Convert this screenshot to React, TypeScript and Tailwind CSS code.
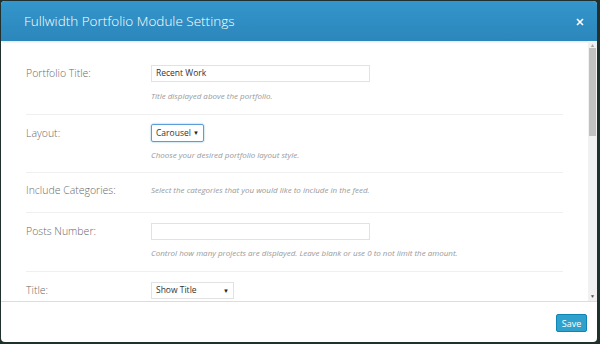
import React from "react";

const font = { fontFamily: '"Open Sans", "Liberation Sans", sans-serif' };

const Label = ({ children }: { children: React.ReactNode }) => (
  <div className="w-[125px] shrink-0 text-[10.5px] font-light text-[#6a6a6a] leading-[16px]">{children}</div>
);

const Desc = ({ children }: { children: React.ReactNode }) => (
  <p className="text-[8px] italic text-[#999] leading-[12px] whitespace-nowrap">{children}</p>
);

const Caret = () => <span className="text-[6px] text-[#222] leading-none">▼</span>;

export default function App() {
  return (
    <div className="w-[600px] h-[344px] bg-[#1f302d] pl-[1px] pt-[1px] pr-[3px] pb-[2px]" style={font}>
      <div className="h-full rounded-[4px] bg-white flex flex-col overflow-hidden">
        <div className="h-[40px] shrink-0 flex items-center justify-between pl-[23px] pr-[13px] bg-gradient-to-b from-[#3396cc] to-[#2c86bb] shadow-[0_1px_2px_rgba(0,0,0,0.12)]">
          <h1 className="text-[13.5px] text-white font-light">Fullwidth Portfolio Module Settings</h1>
          <svg width="8" height="8" viewBox="0 0 8 8" className="mt-[1px]">
            <path d="M1 1L7 7M7 1L1 7" stroke="#fff" strokeWidth="1.6" />
          </svg>
        </div>

        <div className="flex-1 flex min-h-0">
          <div className="flex-1 pl-[25px] pr-[25px] pt-[14px] overflow-hidden">
            <div className="pt-[10px] pb-[12px] border-b border-[#efefef] flex">
              <Label>Portfolio Title:</Label>
              <div>
                <div className="w-[219px] h-[17px] border border-[#e2e2e2] flex items-center px-[4px] text-[8.5px] text-[#333]">
                  Recent Work
                </div>
                <div className="mt-[8px]">
                  <Desc>Title displayed above the portfolio.</Desc>
                </div>
              </div>
            </div>

            <div className="pt-[9px] pb-[11px] border-b border-[#efefef] flex">
              <Label><span className="leading-[18px] block">Layout:</span></Label>
              <div>
                <div className="w-[53px] h-[18px] border border-[#5b9dd9] shadow-[0_0_2px_rgba(30,140,190,0.6)] rounded-[2px] flex items-center justify-between pl-[4px] pr-[4px] text-[8.5px] text-[#333]">
                  Carousel <Caret />
                </div>
                <div className="mt-[7px]">
                  <Desc>Choose your desired portfolio layout style.</Desc>
                </div>
              </div>
            </div>

            <div className="pt-[8px] pb-[13px] border-b border-[#efefef] flex items-center">
              <Label><span className="leading-[18px] block">Include Categories:</span></Label>
              <Desc>Select the categories that you would like to include in the feed.</Desc>
            </div>

            <div className="pt-[10px] pb-[12px] border-b border-[#efefef] flex">
              <Label>Posts Number:</Label>
              <div>
                <div className="w-[219px] h-[17px] border border-[#e2e2e2]" />
                <div className="mt-[7px]">
                  <Desc>Control how many projects are displayed. Leave blank or use 0 to not limit the amount.</Desc>
                </div>
              </div>
            </div>

            <div className="pt-[10px] flex">
              <Label>Title:</Label>
              <div className="w-[83px] h-[17px] border border-[#e2e2e2] flex items-center justify-between pl-[4px] pr-[4px] text-[8.5px] text-[#333]">
                Show Title <Caret />
              </div>
            </div>
          </div>

          <div className="w-[9px] shrink-0 bg-[#f1f1f1] flex flex-col items-center">
            <span className="text-[5px] text-[#a3a3a3] leading-[6px] mt-[1px]">▲</span>
            <div className="w-[7px] h-[88px] bg-[#c1c1c1]" />
            <div className="flex-1" />
            <span className="text-[5px] text-[#505050] leading-[6px] mb-[2px]">▼</span>
          </div>
        </div>

        <div className="h-[41px] shrink-0 border-t border-[#dddddd] flex items-center justify-end pr-[10px]">
          <button className="w-[31px] h-[18px] mt-[2px] bg-[#2ea2cc] border border-[#0e85b4] rounded-[2px] text-[9px] text-white leading-none">
            Save
          </button>
        </div>
      </div>
    </div>
  );
}
